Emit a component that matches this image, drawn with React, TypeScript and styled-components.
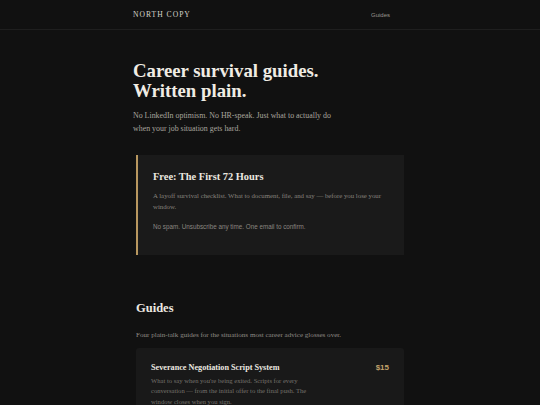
import React from "react";
import styled, { createGlobalStyle } from "styled-components";

const Global = createGlobalStyle`
  html, body { margin:0; padding:0; background:#111111; }
  body { font-family:"Liberation Serif", Georgia, serif; color:#e8e4dc; }
  * { box-sizing:border-box; }
`

const Page = styled.div`
  min-height:405px;
  background:#111111;
`

const Header = styled.header`
  height:30px;
  border-bottom:1px solid #1f1f1f;
  display:flex;
  justify-content:center;
`

const HeaderInner = styled.div`
  width:274px;
  display:flex;
  justify-content:space-between;
  align-items:center;
`

const Brand = styled.div`
  font-size:7.6px;
  letter-spacing:1px;
  color:#d6d2ca;
`

const NavLink = styled.a`
  font-family:"Liberation Sans", Arial, sans-serif;
  font-size:6px;
  color:#9a9690;
  text-decoration:none;
  margin-right:17px;
`

const Hero = styled.section`
  width:274px;
  margin:0 auto;
  padding-top:31px;
`

const Title = styled.h1`
  margin:0;
  font-size:18.8px;
  line-height:20px;
  font-weight:bold;
  color:#f0ece4;
`

const Lead = styled.p`
  margin:8px 0 0;
  font-size:7.9px;
  line-height:13px;
  color:#a9a59e;
  width:215px;
`

const Main = styled.main`
  width:268px;
  margin:0 auto;
`

const FreeCard = styled.div`
  margin-top:20px;
  background:#1a1a1a;
  border-left:2px solid #b8975f;
  padding:16px 15px 24px;
  height:100px;
`

const CardTitle = styled.h3`
  margin:0;
  font-size:10.4px;
  line-height:12px;
  font-weight:bold;
  color:#ece8e0;
`

const CardText = styled.p`
  margin:7px 0 0;
  font-size:6.8px;
  line-height:11px;
  color:#87837d;
`

const Fine = styled.p`
  margin:11px 0 0;
  font-family:"Liberation Sans", Arial, sans-serif;
  font-size:6.3px;
  color:#8a8680;
`

const SectionTitle = styled.h2`
  margin:46px 0 0;
  font-size:12.5px;
  line-height:14px;
  font-weight:bold;
  color:#ece8e0;
`

const SectionLead = styled.p`
  margin:15px 0 0;
  font-size:7.1px;
  line-height:10px;
  color:#8f8b85;
`

const GuideCard = styled.div`
  margin-top:8px;
  background:#191919;
  border-radius:3px;
  padding:15px 15px 10px;
`

const GuideHead = styled.div`
  display:flex;
  justify-content:space-between;
  align-items:baseline;
`

const GuideTitle = styled.h3`
  margin:0;
  font-size:8.2px;
  line-height:10px;
  font-weight:bold;
  color:#ece8e0;
`

const Price = styled.span`
  font-family:"Liberation Sans", Arial, sans-serif;
  font-weight:bold;
  font-size:8px;
  color:#c2a36b;
`

const GuideText = styled.p`
  margin:3px 0 0;
  font-size:6.6px;
  line-height:10.3px;
  color:#76726c;
  width:168px;
`

export default function App() {
  return (
    <Page>
      <Global />
      <Header>
        <HeaderInner>
          <Brand>NORTH COPY</Brand>
          <NavLink href="#guides">Guides</NavLink>
        </HeaderInner>
      </Header>
      <Hero>
        <Title>Career survival guides.<br />Written plain.</Title>
        <Lead>No LinkedIn optimism. No HR-speak. Just what to actually do when your job situation gets hard.</Lead>
      </Hero>
      <Main>
        <FreeCard>
          <CardTitle>Free: The First 72 Hours</CardTitle>
          <CardText>A layoff survival checklist. What to document, file, and say — before you lose your window.</CardText>
          <Fine>No spam. Unsubscribe any time. One email to confirm.</Fine>
        </FreeCard>
        <SectionTitle id="guides">Guides</SectionTitle>
        <SectionLead>Four plain-talk guides for the situations most career advice glosses over.</SectionLead>
        <GuideCard>
          <GuideHead>
            <GuideTitle>Severance Negotiation Script System</GuideTitle>
            <Price>$15</Price>
          </GuideHead>
          <GuideText>What to say when you're being exited. Scripts for every conversation — from the initial offer to the final push. The window closes when you sign.</GuideText>
        </GuideCard>
      </Main>
    </Page>
  );
}
